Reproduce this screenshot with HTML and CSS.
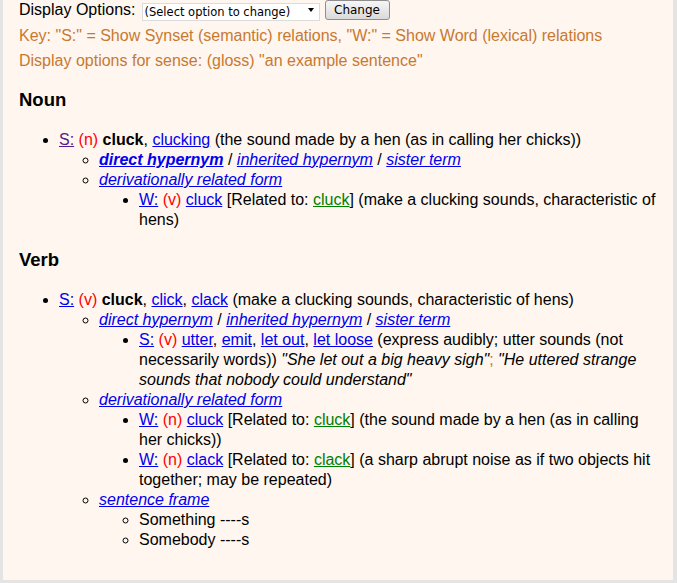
FILE: index.html
```html
<!DOCTYPE html>
<html lang="en">
<head>
    <meta charset="UTF-8">
    <title>WordNet Search - cluck</title>
    <link rel="stylesheet" href="styles.css">
</head>
<body>
    <div class="page">
        <!-- Display options form -->
        <form class="options">
            <label for="o">Display Options:</label>
            <span class="select-wrap">
                <select id="o" class="opt-select">
                    <option>(Select option to change)</option>
                </select>
                <span class="arrow"></span>
            </span>
            <button type="button" class="change-btn">Change</button>
        </form>
        <div class="key">Key: "S:" = Show Synset (semantic) relations, "W:" = Show Word (lexical) relations</div>
        <div class="key">Display options for sense: (gloss) "an example sentence"</div>

        <!-- Noun senses -->
        <h3>Noun</h3>
        <ul class="senses">
            <li><a href="#" class="visited">S:</a> <span class="pos">(n)</span> <b>cluck</b>, <a href="#">clucking</a> (the sound made by a hen (as in calling her chicks))
                <ul>
                    <li><a href="#" class="rel"><b>direct hypernym</b></a> / <a href="#" class="rel">inherited hypernym</a> / <a href="#" class="rel">sister term</a></li>
                    <li><a href="#" class="rel">derivationally related form</a>
                        <ul>
                            <li><a href="#">W:</a> <span class="pos">(v)</span> <a href="#">cluck</a> [Related to: <a href="#" class="green">cluck</a>] (make a clucking sounds, characteristic of hens)</li>
                        </ul>
                    </li>
                </ul>
            </li>
        </ul>

        <!-- Verb senses -->
        <h3>Verb</h3>
        <ul class="senses">
            <li><a href="#">S:</a> <span class="pos">(v)</span> <b>cluck</b>, <a href="#">click</a>, <a href="#">clack</a> (make a clucking sounds, characteristic of hens)
                <ul>
                    <li><a href="#" class="rel">direct hypernym</a> / <a href="#" class="rel">inherited hypernym</a> / <a href="#" class="rel">sister term</a>
                        <ul>
                            <li><a href="#">S:</a> <span class="pos">(v)</span> <a href="#">utter</a>, <a href="#">emit</a>, <a href="#">let out</a>, <a href="#">let loose</a> (express audibly; utter sounds (not necessarily words)) <i>"She let out a big heavy sigh"</i><span class="sep">;</span> <i>"He uttered strange sounds that nobody could understand"</i></li>
                        </ul>
                    </li>
                    <li><a href="#" class="rel">derivationally related form</a>
                        <ul>
                            <li><a href="#">W:</a> <span class="pos">(n)</span> <a href="#">cluck</a> [Related to: <a href="#" class="green">cluck</a>] (the sound made by a hen (as in calling her chicks))</li>
                            <li><a href="#">W:</a> <span class="pos">(n)</span> <a href="#">clack</a> [Related to: <a href="#" class="green">clack</a>] (a sharp abrupt noise as if two objects hit together; may be repeated)</li>
                        </ul>
                    </li>
                    <li><a href="#" class="rel">sentence frame</a>
                        <ul class="frames">
                            <li>Something ----s</li>
                            <li>Somebody ----s</li>
                        </ul>
                    </li>
                </ul>
            </li>
        </ul>
    </div>
</body>
</html>
```

FILE: styles.css
```css
/* Page frame */
html, body {
    margin: 0;
    padding: 0;
}
body {
    background-color: #e4e4e4;
    font-family: "Liberation Sans", Arial, sans-serif;
    font-size: 16px;
    color: #000;
}
.page {
    background-color: #fef6ef;
    margin: 0 4px 0 3px;
    padding: 1px 12px 40px 16px;
    height: 580px;
    box-sizing: border-box;
    overflow: hidden;
    line-height: 20px;
}
/* Options form */
.options {
    display: flex;
    align-items: center;
    height: 22px;
    margin: 0;
}
.options label {
    margin-top: -4px;
}
.select-wrap {
    position: relative;
    display: inline-block;
    margin: -5px 0 0 6px;
    height: 18px;
}
.opt-select {
    appearance: none;
    -webkit-appearance: none;
    width: 178px;
    height: 18px;
    margin: 0;
    font-family: "DejaVu Sans", sans-serif;
    font-size: 11.5px;
    border: 1px solid #dcdcdc;
    border-radius: 0;
    background-color: #fff;
    color: #000;
    padding: 0 2px;
}
.arrow {
    position: absolute;
    right: 6px;
    top: 7px;
    width: 0;
    height: 0;
    border-left: 3.5px solid transparent;
    border-right: 3.5px solid transparent;
    border-top: 4px solid #000;
    pointer-events: none;
}
.change-btn {
    width: 65px;
    height: 20px;
    margin: -4px 0 0 5px;
    font-family: "DejaVu Sans", sans-serif;
    font-size: 12px;
    color: #000;
    border: 1px solid #8e8e8e;
    border-radius: 3px;
    background: linear-gradient(#f6f6f6, #dadada);
    padding: 0;
}
.key {
    color: #c8792f;
    line-height: 25px;
}
/* Headings */
h3 {
    font-size: 18.5px;
    margin: 17px 0 20px;
    line-height: 20px;
}
/* Sense lists */
ul {
    margin: 0;
    padding-left: 40px;
}
.senses {
    margin-bottom: 20px;
}
ul ul {
    list-style-type: circle;
}
ul ul ul {
    list-style-type: disc;
}
ul ul ul.frames {
    list-style-type: circle;
}
a {
    color: #0000ee;
}
a.visited {
    color: #551a8b;
}
a.rel {
    font-style: italic;
}
a.green {
    color: #008000;
}
.pos {
    color: #ff0000;
}
.sep {
    color: #c8792f;
}
```
